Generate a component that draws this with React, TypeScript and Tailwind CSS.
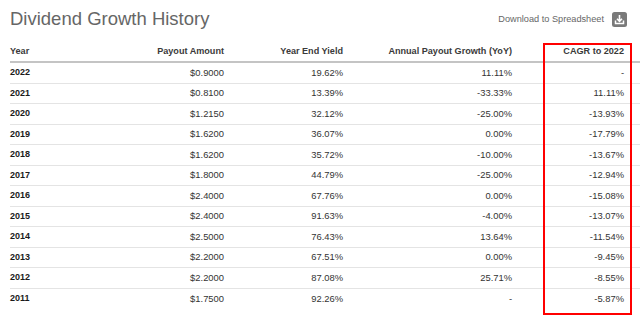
import React from 'react';

interface Row {
    year: string;
    payout: string;
    yld: string;
    growth: string;
    cagr: string;
}

const rows: Row[] = [
    { year: '2022', payout: '$0.9000', yld: '19.62%', growth: '11.11%', cagr: '-' },
    { year: '2021', payout: '$0.8100', yld: '13.39%', growth: '-33.33%', cagr: '11.11%' },
    { year: '2020', payout: '$1.2150', yld: '32.12%', growth: '-25.00%', cagr: '-13.93%' },
    { year: '2019', payout: '$1.6200', yld: '36.07%', growth: '0.00%', cagr: '-17.79%' },
    { year: '2018', payout: '$1.6200', yld: '35.72%', growth: '-10.00%', cagr: '-13.67%' },
    { year: '2017', payout: '$1.8000', yld: '44.79%', growth: '-25.00%', cagr: '-12.94%' },
    { year: '2016', payout: '$2.4000', yld: '67.76%', growth: '0.00%', cagr: '-15.08%' },
    { year: '2015', payout: '$2.4000', yld: '91.63%', growth: '-4.00%', cagr: '-13.07%' },
    { year: '2014', payout: '$2.5000', yld: '76.43%', growth: '13.64%', cagr: '-11.54%' },
    { year: '2013', payout: '$2.2000', yld: '67.51%', growth: '0.00%', cagr: '-9.45%' },
    { year: '2012', payout: '$2.2000', yld: '87.08%', growth: '25.71%', cagr: '-8.55%' },
    { year: '2011', payout: '$1.7500', yld: '92.26%', growth: '-', cagr: '-5.87%' },
];

const cols = 'grid grid-cols-[114px_100px_119px_169px_112px] items-center';

const DownloadIcon = () => (
    <svg width="15" height="15" viewBox="0 0 15 15">
        <rect x="0" y="0" width="15" height="15" rx="2.5" fill="#7a7a7a" />
        <path d="M7.5 3v6M5 6.8l2.5 2.5 2.5-2.5" stroke="#fff" strokeWidth="1.6" fill="none" />
        <path d="M3.5 8.5v3h8v-3" stroke="#fff" strokeWidth="1.5" fill="none" />
    </svg>
);

export default function App() {
    return (
        <div className="relative w-[640px] h-[320px] bg-white font-['Liberation_Sans',Arial,sans-serif] overflow-hidden">
            {/* Title bar */}
            <div className="flex items-center justify-between h-[42px] pl-[10px] pr-[13px] pb-[3px]">
                <h1 className="text-[18.5px] leading-none text-[#666]">Dividend Growth History</h1>
                <div className="flex items-center gap-[8px] text-[9.2px] text-[#666]">
                    <span>Download to Spreadsheet</span>
                    <DownloadIcon />
                </div>
            </div>

            {/* Table */}
            <div className="pl-[10px]">
                <div className={`${cols} h-[21px] border-b-2 border-[#c4c4c4] text-[9.1px] font-bold text-[#3a3a3a]`}>
                    <div>Year</div>
                    <div className="text-right">Payout Amount</div>
                    <div className="text-right">Year End Yield</div>
                    <div className="text-right">Annual Payout Growth (YoY)</div>
                    <div className="text-right">CAGR to 2022</div>
                </div>
                {rows.map((r, i) => (
                    <div
                        key={r.year}
                        className={`${cols} h-[20.5px] text-[9.4px] text-[#333] ${i < rows.length - 1 ? 'border-b border-[#e4e4e4]' : ''}`}
                    >
                        <div className="font-bold text-[#1a1a1a] text-[9px]">{r.year}</div>
                        <div className="text-right">{r.payout}</div>
                        <div className="text-right">{r.yld}</div>
                        <div className="text-right">{r.growth}</div>
                        <div className="text-right">{r.cagr}</div>
                    </div>
                ))}
            </div>

            {/* red annotation box */}
            <div className="absolute left-[543px] top-[43px] w-[89px] h-[272px] border-2 border-[#ff0000]" />
        </div>
    );
}
